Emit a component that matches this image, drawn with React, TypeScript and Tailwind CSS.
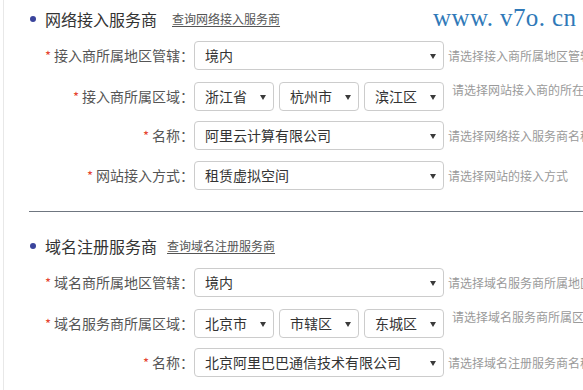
import React from 'react';

const Caret = () => (
  <svg width="6" height="6" viewBox="0 0 6 6" className="shrink-0">
    <path d="M0 1h6L3 6z" fill="#3a3a3a" />
  </svg>
);

// fake select box
const Box = ({ value, w }: { value: string; w: string }) => (
  <div
    className={`${w} h-[29px] shrink-0 flex items-center justify-between rounded-[4px] border border-[#cccccc] bg-white pl-[10px] pr-[7px] text-[14px] text-[#333]`}
  >
    <span className="whitespace-nowrap">{value}</span>
    <Caret />
  </div>
);

const Row = ({
  label,
  mt,
  hint,
  multi,
  children,
}: {
  label: string;
  mt: string;
  hint: string;
  multi?: boolean;
  children: React.ReactNode;
}) => (
  <div className={`flex ${mt} ${multi ? 'items-start' : 'items-center'}`}>
    <div className="w-[190px] h-[29px] shrink-0 flex items-center justify-end text-[14px] text-[#555] whitespace-nowrap">
      <span className="text-[#e5432f] mr-[3px] text-[13px]">*</span>
      {label}：
    </div>
    <div className="flex gap-[5px]">{children}</div>
    <span
      className={`whitespace-nowrap text-[12px] text-[#9a9a9a] ${multi ? 'ml-[8px] leading-[16px]' : 'ml-[4px]'}`}
    >
      {hint}
    </span>
  </div>
);

const Title = ({ title, link, gap, mt }: { title: string; link: string; gap: string; mt: string }) => (
  <div className={`flex items-center h-[24px] ${mt}`}>
    <span className="ml-[26px] w-[6px] h-[6px] rounded-full bg-[#3a449c]" />
    <span className="ml-[9px] text-[16px] text-[#333]">{title}</span>
    <a className={`${gap} text-[12px] text-[#555] underline underline-offset-2`}>{link}</a>
  </div>
);

export default function App() {
  return (
    <div className="relative w-[583px] h-[390px] overflow-hidden bg-white font-['Noto_Sans_CJK_SC','Noto_Sans',sans-serif]">
      <div className="ml-[3px] h-full pt-[7px] border-l border-[#e8e8e8]">
        {/* 网络接入服务商 */}
        <Title title="网络接入服务商" link="查询网络接入服务商" gap="ml-[15px]" mt="" />
        <Row label="接入商所属地区管辖" mt="mt-[10px]" hint="请选择接入商所属地区管辖">
          <Box value="境内" w="w-[250px]" />
        </Row>
        <Row label="接入商所属区域" mt="mt-[12px]" hint="请选择网站接入商的所在" multi>
          <Box value="浙江省" w="w-[80px]" />
          <Box value="杭州市" w="w-[80px]" />
          <Box value="滨江区" w="w-[80px]" />
        </Row>
        <Row label="名称" mt="mt-[10px]" hint="请选择网络接入服务商名称">
          <Box value="阿里云计算有限公司" w="w-[250px]" />
        </Row>
        <Row label="网站接入方式" mt="mt-[11px]" hint="请选择网站的接入方式">
          <Box value="租赁虚拟空间" w="w-[250px]" />
        </Row>

        <div className="ml-[25px] mt-[21px] h-px bg-[#6f7680]" />

        {/* 域名注册服务商 */}
        <Title title="域名注册服务商" link="查询域名注册服务商" gap="ml-[10px]" mt="mt-[22px]" />
        <Row label="域名商所属地区管辖" mt="mt-[10px]" hint="请选择域名服务商所属地区管辖">
          <Box value="境内" w="w-[250px]" />
        </Row>
        <Row label="域名服务商所属区域" mt="mt-[12px]" hint="请选择域名服务商所属区域" multi>
          <Box value="北京市" w="w-[80px]" />
          <Box value="市辖区" w="w-[80px]" />
          <Box value="东城区" w="w-[80px]" />
        </Row>
        <Row label="名称" mt="mt-[10px]" hint="请选择域名注册服务商名称">
          <Box value="北京阿里巴巴通信技术有限公司" w="w-[250px]" />
        </Row>
      </div>

      {/* watermark */}
      <div className="absolute left-[433px] top-[5px] whitespace-nowrap font-['Liberation_Serif',serif] text-[25px] leading-none tracking-[0.4px] text-[#3079b8]">
        www. v7o. cn
      </div>
    </div>
  );
}
